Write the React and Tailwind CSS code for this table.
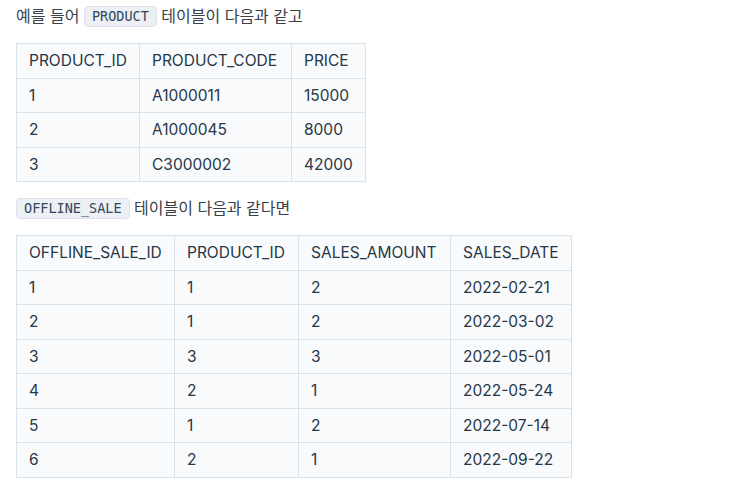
const PRODUCT = {
  cols: [
    { name: 'PRODUCT_ID', w: 'w-[123px]' },
    { name: 'PRODUCT_CODE', w: 'w-[152px]' },
    { name: 'PRICE', w: 'w-[74px]' },
  ],
  rows: [
    ['1', 'A1000011', '15000'],
    ['2', 'A1000045', '8000'],
    ['3', 'C3000002', '42000'],
  ],
}

const OFFLINE_SALE = {
  cols: [
    { name: 'OFFLINE_SALE_ID', w: 'w-[158px]' },
    { name: 'PRODUCT_ID', w: 'w-[124px]' },
    { name: 'SALES_AMOUNT', w: 'w-[152px]' },
    { name: 'SALES_DATE', w: 'w-[120px]' },
  ],
  rows: [
    ['1', '1', '2', '2022-02-21'],
    ['2', '1', '2', '2022-03-02'],
    ['3', '3', '3', '2022-05-01'],
    ['4', '2', '1', '2022-05-24'],
    ['5', '1', '2', '2022-07-14'],
    ['6', '2', '1', '2022-09-22'],
  ],
}

function Code({ children }) {
  return (
    <code className="inline-block rounded-[4px] border border-[#dde2ea] bg-[#eceff4] px-[7px] leading-[19px] text-[13.5px] text-[#33465a] font-['DejaVu_Sans_Mono',monospace] align-[1px]">
      {children}
    </code>
  )
}

function DataTable({ data }) {
  return (
    <table className="border-collapse table-fixed text-[15.5px]">
      <thead>
        <tr>
          {data.cols.map(c => (
            <th key={c.name} className={`${c.w} h-[34.5px] border border-[#d7e2eb] bg-[#f9fafc] px-[12px] text-left font-normal`}>
              {c.name}
            </th>
          ))}
        </tr>
      </thead>
      <tbody>
        {data.rows.map((r, i) => (
          <tr key={i}>
            {r.map((v, j) => (
              <td key={j} className="h-[34.5px] border border-[#d7e2eb] bg-[#f9fafc] px-[12px]">{v}</td>
            ))}
          </tr>
        ))}
      </tbody>
    </table>
  )
}

export default function App() {
  return (
    <div className="min-h-screen bg-white px-4 text-[#263747] font-['Inter','Noto_Sans_CJK_KR',sans-serif]">
      <p className="leading-[32px] text-[16px] text-[#39414b]">
        예를 들어 <Code>PRODUCT</Code> 테이블이 다음과 같고
      </p>
      <div className="mt-[11px]">
        <DataTable data={PRODUCT} />
      </div>
      <p className="mt-[10px] leading-[32px] text-[16px] text-[#39414b]">
        <Code>OFFLINE_SALE</Code> 테이블이 다음과 같다면
      </p>
      <div className="mt-[11px]">
        <DataTable data={OFFLINE_SALE} />
      </div>
    </div>
  )
}
